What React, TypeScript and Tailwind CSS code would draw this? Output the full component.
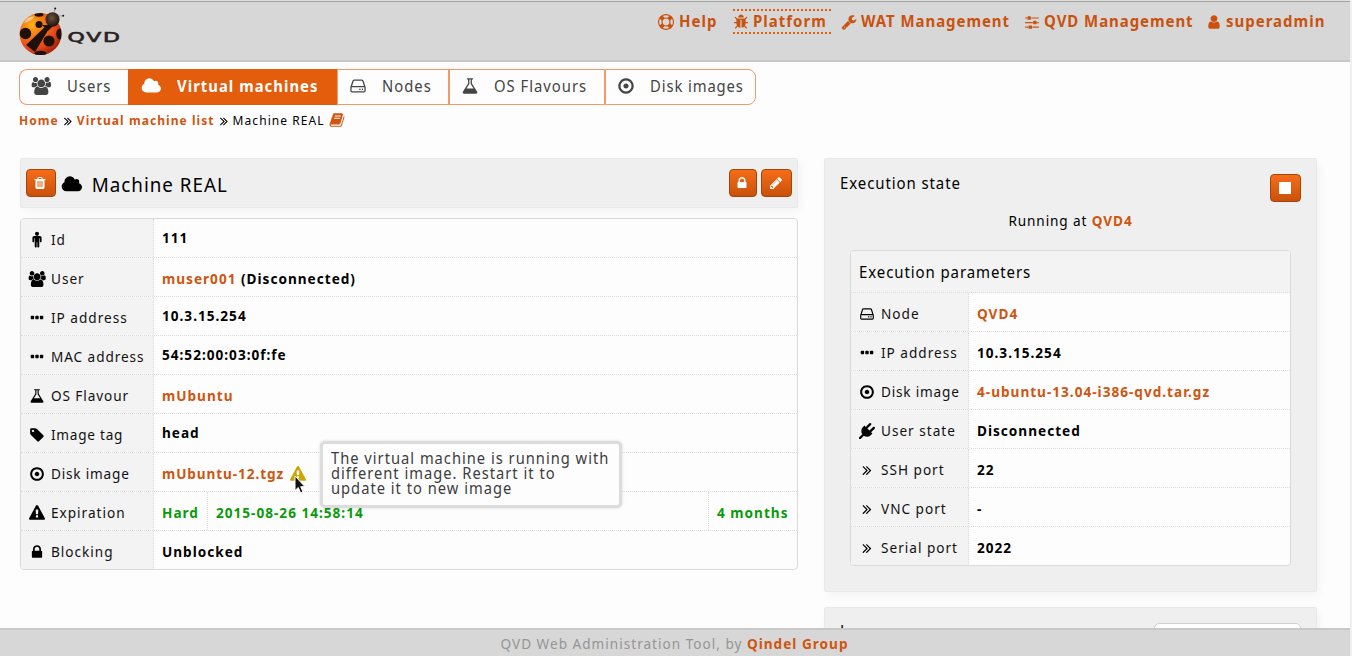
import type { ReactNode } from "react";

type Glyph = { w: number; d: string };

const G: Record<string, Glyph> = {
  cloud: { w: 2048, d: "M1984 1152q0 159-112.5 271.5t-271.5 112.5h-1088q-185 0-316.5-131.5t-131.5-316.5q0-132 71-241.5t187-163.5q-2-28-2-43 0-212 150-362t362-150q158 0 286.5 88t187.5 230q70-62 166-62 106 0 181 75t75 181q0 75-41 138 129 30 213 134.5t84 239.5z" },
  users: { w: 2048, d: "M657 896q-162 5-265 128h-134q-82 0-138-40.5t-56-118.5q0-353 124-353 6 0 43.5 21t97.5 42.5 119 21.5q67 0 133-23-5 37-5 66 0 159 93 286zm1071 637q0 120-73 189.5t-194 69.5h-874q-121 0-194-69.5t-73-189.5q0-53 3.5-103.5t14-109 26.5-108.5 43-97.5 62-81 85.5-53.5 111.5-20q10 0 43 21.5t73 48 107 48 135 21.5 135-21.5 107-48 73-48 43-21.5q61 0 111.5 20t85.5 53.5 62 81 43 97.5 26.5 108.5 14 109 3.5 103.5zm-1024-1277q0 106-75 181t-181 75-181-75-75-181 75-181 181-75 181 75 75 181zm704 384q0 159-112.5 271.5t-271.5 112.5-271.5-112.5-112.5-271.5 112.5-271.5 271.5-112.5 271.5 112.5 112.5 271.5zm576 225q0 78-56 118.5t-138 40.5h-134q-103-123-265-128 93-127 93-286 0-29-5-66 66 23 133 23 59 0 119-21.5t97.5-42.5 43.5-21q124 0 124 353zm-128-609q0 106-75 181t-181 75-181-75-75-181 75-181 181-75 181 75 75 181z" },
  hdd: { w: 1792, d: "M1168 1216q0 33-23.5 56.5t-56.5 23.5-56.5-23.5-23.5-56.5 23.5-56.5 56.5-23.5 56.5 23.5 23.5 56.5zm256 0q0 33-23.5 56.5t-56.5 23.5-56.5-23.5-23.5-56.5 23.5-56.5 56.5-23.5 56.5 23.5 23.5 56.5zm112 160v-320q0-13-9.5-22.5t-22.5-9.5h-1216q-13 0-22.5 9.5t-9.5 22.5v320q0 13 9.5 22.5t22.5 9.5h1216q13 0 22.5-9.5t9.5-22.5zm-1230-480h1180l-157-482q-4-13-16-21.5t-26-8.5h-782q-14 0-26 8.5t-16 21.5zm1358 160v320q0 66-47 113t-113 47h-1216q-66 0-113-47t-47-113v-320q0-25 16-75l197-606q17-53 63-86t101-33h782q55 0 101 33t63 86l197 606q16 50 16 75z" },
  flask: { w: 1792, d: "M1591 1448q56 89 21.5 152.5t-140.5 63.5h-1152q-106 0-140.5-63.5t21.5-152.5l503-793v-399h-64q-26 0-45-19t-19-45 19-45 45-19h512q26 0 45 19t19 45-19 45-45 19h-64v399zm-779-725l-272 429h712l-272-429-20-31v-436h-128v436z" },
  dot: { w: 1792, d: "M1152 896q0 106-75 181t-181 75-181-75-75-181 75-181 181-75 181 75 75 181zm-256-544q-148 0-273 73t-198 198-73 273 73 273 198 198 273 73 273-73 198-198 73-273-73-273-198-198-273-73zm768 544q0 209-103 385.5t-279.5 279.5-385.5 103-385.5-103-279.5-279.5-103-385.5 103-385.5 279.5-279.5 385.5-103 385.5 103 279.5 279.5 103 385.5z" },
  tag: { w: 1792, d: "M576 448q0-53-37.5-90.5t-90.5-37.5-90.5 37.5-37.5 90.5 37.5 90.5 90.5 37.5 90.5-37.5 37.5-90.5zm1067 576q0 53-37 90l-491 492q-39 37-91 37-53 0-90-37l-715-716q-38-37-64.5-101t-26.5-117v-416q0-52 38-90t90-38h416q53 0 117 26.5t102 64.5l715 714q37 39 37 91z" },
  warning: { w: 1792, d: "M1024 1375v-190q0-14-9.5-23.5t-22.5-9.5h-192q-13 0-22.5 9.5t-9.5 23.5v190q0 14 9.5 23.5t22.5 9.5h192q13 0 22.5-9.5t9.5-23.5zm-2-374l18-459q0-12-10-19-13-11-24-11h-220q-11 0-24 11-10 7-10 21l17 457q0 10 10 16.5t24 6.5h185q14 0 23.5-6.5t10.5-16.5zm-14-934l768 1408q35 63-2 126-17 29-46.5 46t-63.5 17h-1536q-34 0-63.5-17t-46.5-46q-37-63-2-126l768-1408q17-31 47-49t65-18 65 18 47 49z" },
  lock: { w: 1792, d: "M640 768h512v-192q0-106-75-181t-181-75-181 75-75 181v192zm832 96v576q0 40-28 68t-68 28h-960q-40 0-68-28t-28-68v-576q0-40 28-68t68-28h32v-192q0-184 132-316t316-132 316 132 132 316v192h32q40 0 68 28t28 68z" },
  ellipsis: { w: 1792, d: "M576 736v192q0 40-28 68t-68 28h-192q-40 0-68-28t-28-68v-192q0-40 28-68t68-28h192q40 0 68 28t28 68zm512 0v192q0 40-28 68t-68 28h-192q-40 0-68-28t-28-68v-192q0-40 28-68t68-28h192q40 0 68 28t28 68zm512 0v192q0 40-28 68t-68 28h-192q-40 0-68-28t-28-68v-192q0-40 28-68t68-28h192q40 0 68 28t28 68z" },
  male: { w: 1792, d: "M1408 640v416q0 40-28 68t-68 28-68-28-28-68v-352h-64v912q0 46-33 79t-79 33-79-33-33-79v-464h-64v464q0 46-33 79t-79 33-79-33-33-79v-912h-64v352q0 40-28 68t-68 28-68-28-28-68v-416q0-80 56-136t136-56h640q80 0 136 56t56 136zm-288-448q0 93-65.5 158.5t-158.5 65.5-158.5-65.5-65.5-158.5 65.5-158.5 158.5-65.5 158.5 65.5 65.5 158.5z" },
  angle: { w: 1792, d: "M979 960q0 13-10 23l-466 466q-10 10-23 10t-23-10l-50-50q-10-10-10-23t10-23l393-393-393-393q-10-10-10-23t10-23l50-50q10-10 23-10t23 10l466 466q10 10 10 23zm384 0q0 13-10 23l-466 466q-10 10-23 10t-23-10l-50-50q-10-10-10-23t10-23l393-393-393-393q-10-10-10-23t10-23l50-50q10-10 23-10t23 10l466 466q10 10 10 23z" },
  plug: { w: 1792, d: "M1755 453q37 38 37 90.5t-37 90.5l-401 400 150 150-160 160q-163 163-389.5 186.5t-411.5-100.5l-362 362h-181v-181l362-362q-124-185-100.5-411.5t186.5-389.5l160-160 150 150 400-401q38-37 91-37t90 37 37 90.5-37 90.5l-400 401 234 234 401-400q38-37 91-37t90 37z" },
  pencil: { w: 1792, d: "M491 1536l91-91-235-235-91 91v107h128v128h107zm523-928q0-22-22-22-10 0-17 7l-542 542q-7 7-7 17 0 22 22 22 10 0 17-7l542-542q7-7 7-17zm-54-192l416 416-832 832h-416v-416zm683 96q0 53-37 90l-166 166-416-416 166-165q36-38 90-38 53 0 91 38l235 234q37 39 37 91z" },
  trash: { w: 1792, d: "M704 1376v-704q0-14-9-23t-23-9h-64q-14 0-23 9t-9 23v704q0 14 9 23t23 9h64q14 0 23-9t9-23zm256 0v-704q0-14-9-23t-23-9h-64q-14 0-23 9t-9 23v704q0 14 9 23t23 9h64q14 0 23-9t9-23zm256 0v-704q0-14-9-23t-23-9h-64q-14 0-23 9t-9 23v704q0 14 9 23t23 9h64q14 0 23-9t9-23zm-544-992h448l-48-117q-7-9-17-11h-317q-10 2-17 11zm928 32v64q0 14-9 23t-23 9h-96v948q0 83-47 143.5t-113 60.5h-832q-66 0-113-58.5t-47-141.5v-952h-96q-14 0-23-9t-9-23v-64q0-14 9-23t23-9h309l70-167q15-37 54-63t79-26h320q40 0 79 26t54 63l70 167h309q14 0 23 9t9 23z" },
  stop: { w: 1792, d: "M1664 192v1408q0 26-19 45t-45 19h-1408q-26 0-45-19t-19-45v-1408q0-26 19-45t45-19h1408q26 0 45 19t19 45z" },
  wrench: { w: 1792, d: "M448 1472q0-26-19-45t-45-19-45 19-19 45 19 45 45 19 45-19 19-45zm644-420l-682 682q-37 37-90 37-52 0-91-37l-106-108q-38-36-38-90 0-53 38-91l681-681q39 98 114.5 173.5t173.5 114.5zm634-435q0 39-23 106-47 134-164.5 217.5t-258.5 83.5q-185 0-316.5-131.5t-131.5-316.5 131.5-316.5 316.5-131.5q58 0 121.5 16.5t107.5 46.5q16 11 16 28t-16 28l-293 169v224l193 107q5-3 79-48.5t135.5-81 70.5-35.5q15 0 23.5 10t8.5 25z" },
  user: { w: 1792, d: "M1536 1399q0 109-62.5 187t-150.5 78h-854q-88 0-150.5-78t-62.5-187q0-85 8.5-160.5t31.5-152 58.5-131 94-89 134.5-34.5q131 128 313 128t313-128q76 0 134.5 34.5t94 89 58.5 131 31.5 152 8.5 160.5zm-256-887q0 159-112.5 271.5t-271.5 112.5-271.5-112.5-112.5-271.5 112.5-271.5 271.5-112.5 271.5 112.5 112.5 271.5z" },
  sliders: { w: 1792, d: "M480 1408v128h-352v-128h352zm352-128q26 0 45 19t19 45v256q0 26-19 45t-45 19h-256q-26 0-45-19t-19-45v-256q0-26 19-45t45-19h256zm160-384v128h-864v-128h864zm-640-512v128h-224v-128h224zm1312 1024v128h-736v-128h736zm-960-1152q26 0 45 19t19 45v256q0 26-19 45t-45 19h-256q-26 0-45-19t-19-45v-256q0-26 19-45t45-19h256zm640 512q26 0 45 19t19 45v256q0 26-19 45t-45 19h-256q-26 0-45-19t-19-45v-256q0-26 19-45t45-19h256zm320 128v128h-224v-128h224zm0-512v128h-864v-128h864z" },
  bug: { w: 1792, d: "M1696 960q0 26-19 45t-45 19h-224q0 171-67 290l208 209q19 19 19 45t-19 45q-18 19-45 19t-45-19l-198-197q-5 5-15 13t-42 28.5-65 36.5-82 29-97 13v-896h-128v896q-51 0-101.5-13.5t-87-33-66-39-43.5-32.5l-15-14-183 207q-20 21-48 21-24 0-43-16-19-18-20.5-44.5t15.5-46.5l202-227q-58-114-58-274h-224q-26 0-45-19t-19-45 19-45 45-19h224v-294l-173-173q-19-19-19-45t19-45 45-19 45 19l173 173h844l173-173q19-19 45-19t45 19 19 45-19 45l-173 173v294h224q26 0 45 19t19 45zm-480-576h-640q0-133 93.5-226.5t226.5-93.5 226.5 93.5 93.5 226.5z" },
  ring: { w: 1792, d: "M896 0q182 0 348 71t286 191 191 286 71 348-71 348-191 286-286 191-348 71-348-71-286-191-191-286-71-348 71-348 191-286 286-191 348-71zm0 128q-190 0-361 90l194 194q82-28 167-28t167 28l194-194q-171-90-361-90zm-678 1129l194-194q-28-82-28-167t28-167l-194-194q-90 171-90 361t90 361zm678 407q190 0 361-90l-194-194q-82 28-167 28t-167-28l-194 194q171 90 361 90zm0-384q159 0 271.5-112.5t112.5-271.5-112.5-271.5-271.5-112.5-271.5 112.5-112.5 271.5 112.5 271.5 271.5 112.5zm484-217l194 194q90-171 90-361t-90-361l-194 194q28 82 28 167t-28 167z" },
  book: { w: 1792, d: "M1703 478q40 57 18 129l-275 906q-19 64-76.5 107.5t-122.5 43.5h-923q-77 0-148.5-53.5t-99.5-131.5q-24-67-2-127 0-4 3-27t4-37q1-8-3-21.5t-3-19.5q2-11 8-21t16.5-23.5 16.5-23.5q23-38 45-91.5t30-91.5q3-10 .5-30t-.5-28q3-11 17-28t17-23q21-36 42-92t25-90q1-9-2.5-32t.5-28q4-13 22-30.5t22-22.5q19-26 42.5-84.5t27.5-96.5q1-8-3-25.5t-2-26.5q2-8 9-18t18-23 17-21q8-12 16.5-30.5t15-35 16-36 19.5-32 26.5-23.5 36-11.5 47.5 5.5l-1 3q38-9 51-9h761q74 0 114 56t18 130l-274 906q-36 119-71.5 153.5t-128.5 34.5h-869q-27 0-38 15-11 16-1 43 24 70 144 70h923q29 0 56-15.5t35-41.5l300-987q7-22 5-57 38 15 59 43zm-1064 2q-4 13 2 22.5t20 9.5h608q13 0 25.5-9.5t16.5-22.5l21-64q4-13-2-22.5t-20-9.5h-608q-13 0-25.5 9.5t-16.5 22.5zm-83 256q-4 13 2 22.5t20 9.5h608q13 0 25.5-9.5t16.5-22.5l21-64q4-13-2-22.5t-20-9.5h-608q-13 0-25.5 9.5t-16.5 22.5z" },
};

function Icon({ name, className = "h-4" }: { name: string; className?: string }) {
  const g = G[name];
  return (
    <svg viewBox={`0 0 ${g.w} 1792`} className={`shrink-0 overflow-visible fill-current ${className}`} aria-hidden="true">
      <path d={g.d} />
    </svg>
  );
}

function Logo() {
  return (
    <svg viewBox="0 0 110 56" className="h-14 w-[110px]">
      <defs>
        <radialGradient id="shell" cx="0.3" cy="0.28" r="0.75">
          <stop offset="0" stopColor="#ffb21c" />
          <stop offset="0.35" stopColor="#f47a12" />
          <stop offset="0.75" stopColor="#e8471a" />
          <stop offset="1" stopColor="#a8290c" />
        </radialGradient>
        <radialGradient id="head" cx="0.45" cy="0.4" r="0.6">
          <stop offset="0" stopColor="#6b5540" />
          <stop offset="1" stopColor="#1c120c" />
        </radialGradient>
        <clipPath id="body"><circle cx="22.500" cy="34" r="21" /></clipPath>
      </defs>
      <circle cx="22.500" cy="34" r="21" fill="url(#shell)" />
      <g clipPath="url(#body)" fill="#1d110a">
        <path d="M29 25L8 45L17 52L32 27z" />
        <path d="M24 25L36 25L30 31z" />
        <ellipse cx="7.500" cy="33.500" rx="5.700" ry="5.800" />
        <circle cx="21" cy="24.500" r="3.500" />
        <ellipse cx="31" cy="41" rx="5.600" ry="5.600" />
        <ellipse cx="42" cy="34" rx="3.800" ry="5.500" />
        <ellipse cx="22.500" cy="53.500" rx="6" ry="2.800" />
        <ellipse cx="21" cy="14.500" rx="4.500" ry="2.200" />
      </g>
      <path d="M6 23Q9 15.500 16.500 16.500Q14 20.500 6 23z" fill="#fff" opacity="0.5" />
      <path d="M38 16L44.500 15.800M36 13L37 8.500" stroke="#888" strokeWidth="0.700" />
      <ellipse cx="34.500" cy="19.500" rx="7" ry="7.300" fill="url(#head)" />
      <circle cx="37.200" cy="8.500" r="1" fill="#1c120c" />
      <circle cx="45.200" cy="15.800" r="1" fill="#1c120c" />
      <text x="49.500" y="42.200" fontSize="14" stroke="#292326" strokeWidth="0.600" textLength="54" lengthAdjust="spacingAndGlyphs" fill="#292326" fontFamily="DejaVu Sans, sans-serif">QVD</text>
    </svg>
  );
}

function Tall({ children }: { children: ReactNode }) {
  return <span className="inline-block origin-[50%_75%] scale-y-[1.08] whitespace-pre">{children}</span>;
}

function TopLink({ icon, label, className, iconBox = "w-5" }: { icon: string; label: string; className: string; iconBox?: string }) {
  return (
    <a className={`flex items-center ${className}`}>
      <span className={`flex shrink-0 ${iconBox}`}><Icon name={icon} /></span>
      <span className="-mt-px flex"><Tall>{label}</Tall></span>
    </a>
  );
}

function Tab({ icon, label, className, iconBox, active = false }: { icon: string; label: string; className: string; iconBox: string; active?: boolean }) {
  return (
    <a className={`flex h-full items-center border pb-0.5 ${active ? "border-[#e35d0c] bg-[#e35d0c] font-bold text-white" : "border-[#f5996a] text-[#444]"} ${className}`}>
      <span className={`flex shrink-0 justify-start ${iconBox}`}><Icon name={icon} className="h-[18px]" /></span>
      <Tall>{label}</Tall>
    </a>
  );
}

function Btn({ icon, className, size = "h-[14px]" }: { icon: string; className: string; size?: string }) {
  return (
    <button className={`flex h-7 items-center justify-center rounded-[4px] border border-[#a4430a] bg-linear-to-b from-[#f66d18] to-[#c8520b] pr-0.5 text-white ${className}`}>
      <Icon name={icon} className={size} />
    </button>
  );
}

const dotted = "border-dotted border-[#dcdcdc]";

function Row({ icon, label, labelCol, children, raised = false, last = false }: { icon: string; label: string; labelCol: string; children: ReactNode; raised?: boolean; last?: boolean }) {
  return (
    <div className={`flex h-[39px] ${last ? "" : "border-b"} ${dotted}`}>
      <div className={`flex shrink-0 items-center whitespace-nowrap border-r bg-[#f3f3f3] pt-[3px] text-[#111] ${dotted} ${labelCol}`}>
        <span className="ml-1.5 mr-[4px] flex w-5 shrink-0 justify-center text-black"><Icon name={icon} /></span>
        {label}
      </div>
      <div className={`flex min-w-0 flex-1 items-center whitespace-pre pl-2 font-bold text-black ${raised ? "" : "pt-[3px]"}`}>{children}</div>
    </div>
  );
}

function Link({ children }: { children: ReactNode }) {
  return <a className="font-bold text-[#cf5510]">{children}</a>;
}

const L = "w-[133px]";
const R = "w-[118px]";
const card = "rounded-[2px] border border-[#e9e9e9] bg-[#efefef] shadow-[3px_4px_8px_rgba(0,0,0,0.04)]";

export default function App() {
  return (
    <div className="relative flex h-[656px] w-[1352px] flex-col overflow-hidden border-r-2 border-[#f0f0f0] bg-[#fdfdfd] font-['Noto_Sans',sans-serif] text-[13.6px] leading-5 tracking-[1px] text-black">
      <header className="flex h-[62px] shrink-0 border-b-2 border-[#c8c8c8] bg-[#d7d7d7] shadow-[inset_0_1px_#dedede,inset_0_2px_#a2a5a2]">
        <div className="w-[657px] shrink-0 pl-[18px]"><Logo /></div>
        <nav className="mt-[9px] flex h-[25px] text-[15px] font-bold text-[#ca520f]">
          <TopLink icon="ring" label="Help" className="w-[76px] pl-px" iconBox="w-[21px]" />
          <TopLink icon="bug" label="Platform" className="w-[98px] border-y-2 border-dotted border-[#e0600f]" />
          <TopLink icon="wrench" label="WAT Management" className="ml-[10px] w-[183px] tracking-[0.93px]" />
          <TopLink icon="sliders" label="QVD Management" className="w-[182px] tracking-[0.93px]" />
          <TopLink icon="user" label="superadmin" className="w-[140px]" />
        </nav>
      </header>

      <nav className="ml-[19px] mt-[7px] flex h-9 w-[737px] shrink-0 text-[14.8px]">
        <Tab icon="users" label="Users" className="w-[109px] rounded-l-lg border-r-0 pl-[11px]" iconBox="w-9" />
        <Tab icon="cloud" label="Virtual machines" className="w-[209px] pl-[12px] tracking-[1.05px]" iconBox="w-9" active />
        <Tab icon="hdd" label="Nodes" className="w-[112px] pl-[11px]" iconBox="w-[33px]" />
        <Tab icon="flask" label="OS Flavours" className="w-[156px] pl-[11px]" iconBox="w-[33px]" />
        <Tab icon="dot" label="Disk images" className="w-[151px] rounded-r-lg pl-[11px] tracking-[0.9px]" iconBox="w-[33px]" />
      </nav>

      <div className="ml-[19px] mt-[6px] flex h-5 shrink-0 items-center whitespace-pre text-[12px] tracking-[1.06px]">
        <Link>Home</Link>
        <Icon name="angle" className="mx-0.5 h-[14px]" />
        <Link>Virtual machine list</Link>
        <Icon name="angle" className="mx-0.5 h-[14px]" />
        <span>Machine REAL</span>
        <span className="-mt-0.5 ml-1 text-[#cf5510]"><Icon name="book" className="h-4" /></span>
      </div>

      <main className="ml-5 mt-[27px] flex min-h-0 flex-1 items-start gap-[26px]">
        <section className="w-[778px] shrink-0">
          <div className={`flex h-[50px] items-center pl-[5px] pr-[5px] ${card}`}>
            <Btn icon="trash" className="w-[30px]" />
            <Icon name="cloud" className="ml-[5px] mt-0.5 h-[19px]" />
            <h1 className="ml-[9px] mt-[3px] flex-1 text-[18.800px]"><Tall>Machine REAL</Tall></h1>
            <Btn icon="lock" className="w-7" />
            <Btn icon="pencil" className="ml-1 w-[31px]" />
          </div>
          <div className="mt-[10px] h-[352px] overflow-hidden rounded-[4px] border border-[#d9d9d9]">
            <Row icon="male" label="Id" labelCol={L} raised>111</Row>
            <Row icon="users" label="User" labelCol={L}><Link>muser001</Link> (Disconnected)</Row>
            <Row icon="ellipsis" label="IP address" labelCol={L} raised>10.3.15.254</Row>
            <Row icon="ellipsis" label="MAC address" labelCol={`${L} tracking-[0.93px]`} raised>54:52:00:03:0f:fe</Row>
            <Row icon="flask" label="OS Flavour" labelCol={`${L} tracking-[0.9px]`}><Link>mUbuntu</Link></Row>
            <Row icon="tag" label="Image tag" labelCol={`${L} tracking-[0.75px]`} raised>head</Row>
            <Row icon="dot" label="Disk image" labelCol={`${L} tracking-[0.8px]`}>
              <span className="tracking-[0.9px]"><Link>mUbuntu-12.tgz</Link></span>
              <span className="ml-1.5 text-[#cba500]"><Icon name="warning" /></span>
            </Row>
            <Row icon="warning" label="Expiration" labelCol={L} raised>
              <div className="flex h-full flex-1 text-[#0a9a0a]">
                <span className={`flex w-[46px] items-center border-r pt-[3px] ${dotted}`}>Hard</span>
                <span className={`flex flex-1 items-center border-r pl-2 pt-[3px] ${dotted}`}>2015-08-26 14:58:14</span>
                <span className="flex w-[88px] items-center pl-2 pt-[3px]">4 months</span>
              </div>
            </Row>
            <Row icon="lock" label="Blocking" labelCol={L} last>Unblocked</Row>
          </div>
        </section>

        <aside className="w-[493px] shrink-0">
          <div className={`flex h-[434px] flex-col ${card}`}>
            <div className="flex h-[52px] shrink-0 justify-between pl-[15px] pr-[15px] pt-[15px] text-[15px] tracking-[0.9px]">
              <h2 className="-mt-px"><Tall>Execution state</Tall></h2>
              <Btn icon="stop" className="w-[31px]" />
            </div>
            <p className="text-center tracking-[0.9px]">Running at <Link>QVD4</Link></p>
            <div className="ml-[25px] mt-[19px] h-[316px] w-[441px] shrink-0 overflow-hidden rounded-[4px] border border-[#d9d9d9] bg-[#fdfdfd]">
              <h3 className={`flex h-[42px] items-center border-b bg-[#f3f3f3] pl-2 text-[15px] tracking-[0.9px] ${dotted}`}><Tall>Execution parameters</Tall></h3>
              <Row icon="hdd" label="Node" labelCol={R}><Link>QVD4</Link></Row>
              <Row icon="ellipsis" label="IP address" labelCol={R}>10.3.15.254</Row>
              <Row icon="dot" label="Disk image" labelCol={`${R} tracking-[0.8px]`}><Link>4-ubuntu-13.04-i386-qvd.tar.gz</Link></Row>
              <Row icon="plug" label="User state" labelCol={R}>Disconnected</Row>
              <Row icon="angle" label="SSH port" labelCol={R}>22</Row>
              <Row icon="angle" label="VNC port" labelCol={R}>-</Row>
              <Row icon="angle" label="Serial port" labelCol={R} last>2022</Row>
            </div>
          </div>
          <div className={`mt-[15px] flex h-[60px] items-start justify-between pl-[15px] pr-[15px] pt-[15px] text-[15px] ${card}`}>
            <h2 className="-mt-0.5"><Tall>Log</Tall></h2>
            <div className="h-8 w-[147px] rounded-[5px] border border-[#cfcfcf] bg-white" />
          </div>
        </aside>
      </main>

      <footer className="relative flex h-7 shrink-0 items-center justify-center whitespace-pre border-t-2 border-[#c8c8c8] bg-[#d7d7d7] pr-px pt-px text-[#959595]">
        QVD Web Administration Tool, by <Link>Qindel Group</Link>
      </footer>

      <div className="absolute left-[320px] top-[441px] w-[302px] rounded-[5px] border-[3px] border-[#dcdcdc] bg-[#fdfdfd] pb-[9px] pl-2 pt-[7px] text-[14.7px] leading-[15px] text-[#3d3d3d] shadow-[0_0_3px_rgba(0,0,0,0.15)]">
        <div className="flex flex-col items-start">
          <Tall>The virtual machine is running with</Tall>
          <Tall>different image. Restart it to</Tall>
          <Tall>update it to new image</Tall>
        </div>
      </div>
      <svg viewBox="0 0 14 20" className="absolute left-[293px] top-[475px] h-5 w-3.5 overflow-visible">
        <path d="M2 1V15.500L5.300 12.500L7.600 18L10 17L7.700 11.700H12z" fill="#111" stroke="#fff" strokeWidth="1" />
      </svg>
    </div>
  );
}
